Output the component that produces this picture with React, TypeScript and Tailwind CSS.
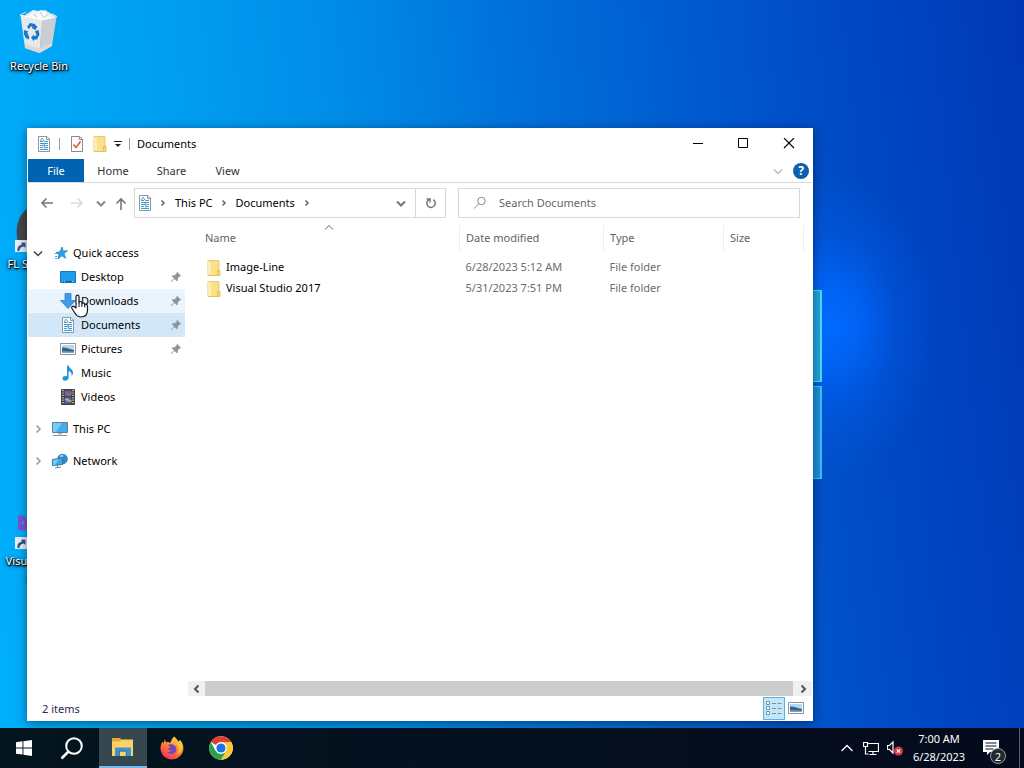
import type { ReactNode } from "react";

type IconProps = { className?: string };

function DocumentIcon({ className = "" }: IconProps) {
  return (
    <svg viewBox="0 0 16 16" className={`size-4 shrink-0 ${className}`} aria-hidden="true">
      <path d="M2.500 .5h8.500l2.500 2.500v12.500h-11z" fill="#fbfdfe" stroke="#8b979f" />
      <path d="M10.500 .5v3h3" fill="none" stroke="#8b979f" />
      <path d="M4 5.500h3M8.500 5.500h3.500M4 7.500h8M4 9.500h4M9.500 9.500h2.500M4 11.500h3M8.500 11.500h3.500M4 13.500h8" stroke="#3d9bd0" />
      <path d="M4.500 5l1-2.500h1L8 5.500M8 7.500l1 5" fill="none" stroke="#5f9cc0" />
    </svg>
  );
}

function CheckDocIcon() {
  return (
    <svg viewBox="0 0 16 18" className="h-[18px] w-4 shrink-0" aria-hidden="true">
      <path d="M2.500 1.500h8l3 3v12h-11z" fill="#fcfcfc" stroke="#8a8a8a" />
      <path d="M10.500 1.500v3h3" fill="none" stroke="#8a8a8a" />
      <path d="M4.500 9.500l2.500 3 4.500-6" fill="none" stroke="#d2643c" strokeWidth="1.700" />
    </svg>
  );
}

function FolderIcon({ className = "" }: IconProps) {
  return (
    <svg viewBox="0 0 16 16" className={`size-4 shrink-0 ${className}`} aria-hidden="true">
      <path d="M2 .5h11v15H2z" fill="#fbe08a" stroke="#ecc96a" />
      <path d="M2 1l3 1.200v13L2 14z" fill="#fdedb4" />
      <path d="M11.500 10.500h2.500v5h-2.500z" fill="#f7d973" stroke="#d8b24e" strokeWidth=".7" />
      <path d="M2 15.500h12" stroke="#e6c25c" />
    </svg>
  );
}

function StarIcon() {
  return (
    <svg viewBox="0 0 16 16" className="size-4 shrink-0" aria-hidden="true">
      <path d="M9 2l1.200 4 4.300-.2-3.500 2.700 1.600 4.800L8.800 10.800 5 14l1-4.300L3.200 7.500l3.800-.8z" fill="#2f9fe3" stroke="#1e86cb" strokeWidth=".8" />
      <path d="M1.500 8.500h2.500M2 11.500h2.500M2 13.500h2" stroke="#4eaee6" />
    </svg>
  );
}

function DesktopIcon() {
  return (
    <svg viewBox="0 0 16 16" className="size-4 shrink-0" aria-hidden="true">
      <path d="M.5 2.500h15v11H.5z" fill="#1f9bf0" stroke="#1577c4" />
      <path d="M1 12.500h14" stroke="#0d62a8" />
      <path d="M2 12.500h1M4 12.500h1M12 12.500h2" stroke="#8ed1ff" />
    </svg>
  );
}

function DownloadIcon() {
  return (
    <svg viewBox="0 0 16 16" className="size-4 shrink-0" aria-hidden="true">
      <path d="M5 .5h6v7h4.500L8 15.500.5 7.500H5z" fill="#3f9be2" stroke="#2b83cc" strokeWidth=".8" />
    </svg>
  );
}

function PicturesIcon({ className = "" }: IconProps) {
  return (
    <svg viewBox="0 0 16 16" className={`size-4 shrink-0 ${className}`} aria-hidden="true">
      <path d="M.5 2.500h15v11H.5z" fill="#fff" stroke="#8e9499" />
      <path d="M2 4h12v8H2z" fill="#b4daf3" />
      <path d="M2 6.500c4-.5 7 1.500 12 2.500v3H2z" fill="#3a617f" />
      <path d="M2 10.500c4-1 8 .5 12 0V12H2z" fill="#7da4c2" />
    </svg>
  );
}

function MusicIcon() {
  return (
    <svg viewBox="0 0 16 16" className="size-4 shrink-0" aria-hidden="true">
      <path d="M7 .5h1.600c.3 3 4.900 3.500 4.400 8-.2 1.200-.8 2-1.500 2.500.6-3-.8-4.300-2.900-5V13c0 1.600-1.600 2.700-3.400 2.700S2.500 14.600 2.500 13.200s1.700-2.500 4.500-2z" fill="#1e96dc" />
    </svg>
  );
}

function VideosIcon() {
  return (
    <svg viewBox="0 0 16 16" className="size-4 shrink-0" aria-hidden="true">
      <path d="M1.500 .5h13v15h-13z" fill="#333" stroke="#444" />
      <path d="M3 1v14M13 1v14" stroke="#f4f4f4" strokeWidth="1.300" strokeDasharray="1.200 1.200" />
      <path d="M4.500 1.500h7v6h-7z" fill="#4a68b8" />
      <path d="M4.500 4l2-1.500 2 2 3-2v3l-3 1.500z" fill="#b85e4e" />
      <path d="M4.500 8.500h7v6h-7z" fill="#4c6ac4" />
      <path d="M4.500 10.500l3-1.500 2 2.500 2-.5v2l-3-.5z" fill="#d4b24a" />
    </svg>
  );
}

function ComputerIcon() {
  return (
    <svg viewBox="0 0 16 16" className="size-4 shrink-0" aria-hidden="true">
      <path d="M.5 1.500h15v10H.5z" fill="#45aeea" stroke="#5f7f92" />
      <path d="M1 2h9L4 11H1z" fill="#78ccf7" />
      <path d="M6 12h4v1.500H6z" fill="#a9b4bb" />
      <path d="M1 14.500h14" stroke="#8b979f" />
    </svg>
  );
}

function NetworkIcon() {
  return (
    <svg viewBox="0 0 16 16" className="size-4 shrink-0" aria-hidden="true">
      <circle cx="10.500" cy="6" r="5.300" fill="#3987bf" />
      <path d="M8 2.500c1.500-1.500 3.500-.8 3.500 .3S9 5 8 4.300z" fill="#8fc8e8" />
      <path d="M.5 6.500l10-1.500v6.500l-10 1z" fill="#3fa9e4" stroke="#33769f" />
      <path d="M1 7l6-1-4 6H1z" fill="#78c9f2" />
      <path d="M5.500 12v2.500M3 15l6-.8" stroke="#6e8796" />
    </svg>
  );
}

function PinIcon() {
  return (
    <svg viewBox="0 0 12 12" className="size-3 shrink-0" role="img" aria-label="Pinned">
      <path d="M7 .8L11.200 5l-1.200.6-.5-.2-1.700 2 .1 1.900-1 .9L4.500 7.900 1 11.200l-.4-.4L4 7.400 1.800 5.100l.9-.9 1.900.1 2-1.700-.2-.6z" fill="#8d959b" />
    </svg>
  );
}

function Chevron({ dir, className = "" }: { dir: "right" | "down" | "up" | "left"; className?: string }) {
  const paths = {
    right: "M3.500 1.500L7 5 3.500 8.500",
    left: "M6.500 1.500L3 5l3.500 3.500",
    down: "M1 3.500L5 7.500l4-4",
    up: "M1 6.500l4-4 4 4",
  };
  return (
    <svg viewBox="0 0 10 10" className={`size-2.5 shrink-0 ${className}`} fill="none" stroke="currentColor" aria-hidden="true">
      <path d={paths[dir]} />
    </svg>
  );
}

function CrumbChevron() {
  return (
    <svg viewBox="0 0 10 10" className="ml-[5px] size-2.5 shrink-0" fill="none" stroke="#666" strokeWidth="1.500" aria-hidden="true">
      <path d="M3.500 2.500L6 5 3.500 7.500" />
    </svg>
  );
}

function ArrowIcon({ dir, className = "" }: { dir: "left" | "right" | "up"; className?: string }) {
  const paths = {
    left: "M13 7H2M6.500 2.500L2 7l4.500 4.500",
    right: "M1 7h11M7.500 2.500L12 7l-4.500 4.500",
    up: "M7 14V3M2.500 7.500L7 3l4.500 4.500",
  };
  return (
    <svg viewBox="0 0 14 14" className={`size-3.5 shrink-0 ${className}`} fill="none" stroke="currentColor" strokeWidth="1.600" aria-hidden="true">
      <path d={paths[dir]} />
    </svg>
  );
}

function ShortcutBadge() {
  return (
    <svg viewBox="0 0 12 12" className="absolute bottom-0 left-0 size-3" aria-hidden="true">
      <path d="M0 0h12v12H0z" fill="#e9eef5" />
      <path d="M2.500 11C2 7 4 5 6.500 5V2.500l4 .2v5L8.500 6.500C6 7 4.500 8.500 4.500 11z" fill="#2f5597" />
    </svg>
  );
}

function RecycleBinIcon() {
  return (
    <svg viewBox="0 0 48 48" className="size-12" aria-hidden="true">
      <path d="M10 9l8-5 6 1 6-1 10 6-2 4H12z" fill="#e3e8ec" />
      <path d="M14 9l4-4 4 3 3-4 6 2 1 4 5-1-3 4H15z" fill="#f8fafb" />
      <path d="M18 8l4 3M25 6l3 5M32 9l-3 3" stroke="#b9c4cc" />
      <path d="M5.500 9l22 5-3 33L10 42z" fill="#e6eaed" />
      <path d="M27 14l14.500-3L37 40 24.500 47z" fill="#c8ced3" />
      <path d="M5 9l22.500 5L42 10.500" fill="none" stroke="#fff" strokeWidth="1.200" />
      <path d="M5 9l6-3M42 10.500l-5-3" stroke="#c9e2f2" />
      <path d="M10.500 38l14.500 4.500L37 37v3l-12.500 7L10 42z" fill="#dcd9d6" />
      <g fill="#1976c9">
        <path d="M12 21l3-4 5 1 1 2 1.500 0-2 4-4-2 1.200-.6-1.700-1.400-2 3z" />
        <path d="M9 24l4.500 1.500-1.300 1 2 4.500-.5 2.500-3-1.500-2-4.500z" />
        <path d="M20 25l3.500-1 1 4.500-2.500 5h-3v2l-3-4 3-3v1.800l2.500-.8z" />
      </g>
    </svg>
  );
}

function DesktopShortcut({ label, row, children }: { label: string; row: string; children: ReactNode }) {
  return (
    <button type="button" className={`${row} flex flex-col items-center gap-1 self-start text-center`}>
      {children}
      <span className="text-[11px] leading-4 text-white [text-shadow:1px_1px_1px_#000,0_1px_2px_#000,0_1px_4px_#000]">{label}</span>
    </button>
  );
}

const quickAccess = [
  { label: "Desktop", icon: <DesktopIcon />, pinned: true, row: "" },
  { label: "Downloads", icon: <DownloadIcon />, pinned: true, row: "bg-[#e9f4fd]" },
  { label: "Documents", icon: <DocumentIcon />, pinned: true, row: "bg-[#d2e8f9]" },
  { label: "Pictures", icon: <PicturesIcon />, pinned: true, row: "" },
  { label: "Music", icon: <MusicIcon />, pinned: false, row: "" },
  { label: "Videos", icon: <VideosIcon />, pinned: false, row: "" },
];

const files = [
  { name: "Image-Line", modified: "6/28/2023 5:12 AM", type: "File folder" },
  { name: "Visual Studio 2017", modified: "5/31/2023 7:51 PM", type: "File folder" },
];

function TitleBar() {
  return (
    <header className="flex h-[30px] items-center">
      <div className="flex flex-1 items-center pl-2">
        <DocumentIcon />
        <span className="mx-[7px] h-3 w-px bg-[#9a9a9a]" />
        <button type="button" aria-label="Properties" className="ml-0.5">
          <CheckDocIcon />
        </button>
        <button type="button" aria-label="New folder" className="ml-[7px]">
          <FolderIcon />
        </button>
        <button type="button" aria-label="Customize Quick Access Toolbar" className="ml-1.5">
          <svg viewBox="0 0 8 8" className="size-2" aria-hidden="true">
            <path d="M0 1.500h8" stroke="#222" />
            <path d="M1 4h6L4 7z" fill="#222" />
          </svg>
        </button>
        <span className="mx-[7px] h-3 w-px bg-[#9a9a9a]" />
        <h1 className="text-[11px] text-black">Documents</h1>
      </div>
      <div className="flex h-full text-black">
        <button type="button" aria-label="Minimize" className="grid w-[45px] place-items-center">
          <svg viewBox="0 0 12 12" className="size-3" stroke="currentColor" aria-hidden="true"><path d="M1 5.500h10" /></svg>
        </button>
        <button type="button" aria-label="Maximize" className="grid w-[45px] place-items-center">
          <svg viewBox="0 0 12 12" className="size-3" fill="none" stroke="currentColor" aria-hidden="true"><path d="M1.500 .5h9v9h-9z" /></svg>
        </button>
        <button type="button" aria-label="Close" className="grid w-[47px] place-items-center">
          <svg viewBox="0 0 12 12" className="size-3" stroke="currentColor" strokeWidth="1.100" aria-hidden="true"><path d="M1 0l10 10M11 0L1 10" /></svg>
        </button>
      </div>
    </header>
  );
}

function Ribbon() {
  return (
    <nav aria-label="Ribbon" className="flex h-6 items-center border-b border-[#dadbdc] text-[11px] text-[#333]">
      <button type="button" className="h-full w-14 bg-[#0063b1] pt-px text-white">File</button>
      <button type="button" className="h-full w-[58px] pt-px">Home</button>
      <button type="button" className="h-full w-[59px] pt-px">Share</button>
      <button type="button" className="h-full w-[53px] pt-px">View</button>
      <button type="button" aria-label="Expand the Ribbon" className="ml-auto text-[#bbb]">
        <Chevron dir="down" className="size-2 stroke-[1.5px]" />
      </button>
      <button type="button" aria-label="Help" className="mr-[3px] ml-2.5 grid size-4 place-items-center rounded-full bg-[#0f5fae] text-xs font-bold text-white">
        ?
      </button>
    </nav>
  );
}

function AddressRow() {
  return (
    <div className="flex items-center pt-[5px] pr-3 text-[11px]">
      <div className="flex w-[106px] items-center text-[#777]">
        <button type="button" aria-label="Back" className="ml-3"><ArrowIcon dir="left" /></button>
        <button type="button" aria-label="Forward" className="ml-4 text-[#dadada]"><ArrowIcon dir="right" /></button>
        <button type="button" aria-label="Recent locations" className="ml-3 text-[#888]"><Chevron dir="down" className="size-2 stroke-2" /></button>
        <button type="button" aria-label="Up" className="ml-2"><ArrowIcon dir="up" /></button>
      </div>
      <div className="flex h-[30px] w-[312px] items-center border border-[#d9d9d9] pl-0.5">
        <DocumentIcon />
        <CrumbChevron />
        <a href="#this-pc" className="ml-[7px] text-black">This PC</a>
        <span className="ml-px flex"><CrumbChevron /></span>
        <a href="#documents" className="ml-[7px] text-black">Documents</a>
        <span className="ml-0.5 flex"><CrumbChevron /></span>
        <button type="button" aria-label="Previous locations" className="ml-auto grid h-full w-7 place-items-center text-[#777]">
          <Chevron dir="down" className="stroke-2" />
        </button>
        <button type="button" aria-label="Refresh" className="grid h-full w-[30px] place-items-center border-l border-[#d9d9d9]">
          <svg viewBox="0 0 12 12" className="size-3" fill="none" stroke="#777" strokeWidth="1.500" aria-hidden="true">
            <path d="M8.300 2.700a4.200 4.200 0 1 1-5 .3l1.700-1" />
            <path d="M1.500 2H5v3.500" />
          </svg>
        </button>
      </div>
      <label className="ml-3 flex h-[30px] flex-1 items-center border border-[#d9d9d9] pl-3.5">
        <svg viewBox="0 0 14 14" className="size-3.5 shrink-0" fill="none" stroke="#888" aria-hidden="true">
          <circle cx="8.500" cy="5" r="3.700" />
          <path d="M6 7.700L1 12.500" />
        </svg>
        <input type="search" aria-label="Search Documents" placeholder="Search Documents" className="ml-3 min-w-0 flex-1 text-[11px] outline-none placeholder:text-[#666]" />
      </label>
    </div>
  );
}

function NavPane() {
  return (
    <nav aria-label="Folders" className="w-40 shrink-0 pt-[23px] text-[11px] text-black">
      <a href="#quick-access" className="flex h-6 items-center gap-1 pl-[5px]">
        <Chevron dir="down" className="mr-1.5 stroke-[1.5px] text-[#444]" />
        <StarIcon />Quick access
      </a>
      <ul className="mr-[3px]">
        {quickAccess.map((item) => (
          <li key={item.label}>
            <a href={`#${item.label.toLowerCase()}`} className={`flex h-6 items-center gap-[5px] pr-[3px] pl-8 ${item.row}`}>
              {item.icon}
              <span className="flex-1">{item.label}</span>
              {item.pinned && <PinIcon />}
            </a>
          </li>
        ))}
      </ul>
      <a href="#this-pc" className="mt-2 flex h-6 items-center gap-[5px] pl-[5px]">
        <Chevron dir="right" className="mr-1 stroke-[1.5px] text-[#999]" />
        <ComputerIcon />This PC
      </a>
      <a href="#network" className="mt-2 flex h-6 items-center gap-[5px] pl-[5px]">
        <Chevron dir="right" className="mr-1 stroke-[1.5px] text-[#999]" />
        <NetworkIcon />Network
      </a>
    </nav>
  );
}

function FileList() {
  return (
    <section className="flex min-w-0 flex-1 flex-col">
      <div className="flex-1 pt-[7px] pr-2">
        <table className="w-full table-fixed text-left text-[11px]">
          <colgroup>
            <col />
            <col className="w-36" />
            <col className="w-[120px]" />
            <col className="w-20" />
          </colgroup>
          <thead className="text-[#5f6368]">
            <tr className="h-[27px]">
              <th className="relative border-r border-[#eeeeee] pl-[17px] font-normal">
                Name
                <Chevron dir="up" className="absolute -top-0.5 left-1/2 text-[#666]" />
              </th>
              <th className="border-r border-[#eeeeee] pl-1.5 font-normal">Date modified</th>
              <th className="border-r border-[#eeeeee] pl-1.5 font-normal">Type</th>
              <th className="border-r border-[#eeeeee] pl-1.5 font-normal">Size</th>
            </tr>
          </thead>
          <tbody className="before:block before:h-[5px]">
            {files.map((file) => (
              <tr key={file.name} className="h-[21px] text-[#6d6d6d]">
                <td className="pl-[18px] text-black">
                  <span className="flex items-center gap-1"><FolderIcon />{file.name}</span>
                </td>
                <td className="pl-1.5">{file.modified}</td>
                <td className="pl-1.5">{file.type}</td>
                <td />
              </tr>
            ))}
          </tbody>
        </table>
      </div>
      <div className="flex h-[15px] bg-[#f0f0f0] text-[#555]">
        <button type="button" aria-label="Scroll left" className="grid w-[17px] place-items-center"><Chevron dir="left" className="stroke-2" /></button>
        <div className="flex-1 bg-[#cdcdcd]" />
        <button type="button" aria-label="Scroll right" className="grid w-[19px] place-items-center"><Chevron dir="right" className="stroke-2" /></button>
      </div>
    </section>
  );
}

function StatusBar() {
  return (
    <footer className="flex h-6 items-center pr-2 pl-3.5 text-[11px] text-[#1e2a55]">
      <span className="flex-1 pt-0.5">2 items</span>
      <button type="button" aria-label="Details view" className="grid h-[23px] w-[22px] place-items-center border border-[#5fb0dc] bg-[#c3e6f8]">
        <svg viewBox="0 0 16 14" className="h-3.5 w-4" fill="none" stroke="#7d919d" aria-hidden="true">
          <path d="M.5 .5h3v3h-3zM.5 5.500h3v3h-3zM.5 10.500h3v3h-3z" fill="#fff" />
          <path d="M6 2.500h4M11.500 2.500h4M6 7.500h4M11.500 7.500h4M6 12.500h4M11.500 12.500h4" />
        </svg>
      </button>
      <button type="button" aria-label="Large icons view" className="ml-[3px]"><PicturesIcon className="size-3.5" /></button>
    </footer>
  );
}

function FirefoxIcon() {
  return (
    <svg viewBox="0 0 24 24" className="size-6" aria-hidden="true">
      <defs>
        <linearGradient id="flame" x1="0.8" y1="0" x2="0.2" y2="1">
          <stop offset="0" stopColor="#ffe14a" />
          <stop offset="0.45" stopColor="#ff8a2b" />
          <stop offset="0.8" stopColor="#fb4a4a" />
          <stop offset="1" stopColor="#ee2a6c" />
        </linearGradient>
      </defs>
      <path d="M14 .5c2.200 1.500 3.500 3.200 4.200 5 1-.2 1.500-.9 1.500-2 3.800 4 4.600 8.900 2.800 13-1.800 4.200-6 7-10.700 7C5.500 23.500.5 18.500.5 12.300c0-3 .9-5.300 2-6.900l.7 2L5 3.200l1 3.200c1.500-.5 3-.4 4.400.3C11 4.500 12.200 2.300 14 .5z" fill="url(#flame)" />
      <path d="M7.500 9.500c2.500-2 5-2 7 0 2.500 2 2.500 5.500.3 7.300-2.300 1.900-6 1.400-7.500-1 1.800.6 3.500 0 4.800-1.200-1.800-.3-4-.6-4.600-2.100 1.500-.1 2.500-.8 2.700-1.800-.8-.7-1.800-.9-2.700-1.200z" fill="#7542c8" />
      <path d="M14.500 2.500c.2 4 4.500 5.500 4.500 10 0 3-1.500 5-3.500 6 5.500-.5 7.500-6 5.500-11-1.500 1-5 .2-6.500-5z" fill="#ffd23c" opacity=".8" />
    </svg>
  );
}

function ChromeIcon() {
  return (
    <svg viewBox="0 0 24 24" className="size-6" aria-hidden="true">
      <circle cx="12" cy="12" r="11.800" fill="#fff" />
      <path d="M12 12L1.800 6A11.800 11.800 0 0 1 22.200 6z" fill="#e33b2e" />
      <path d="M12 12V6h10.200A11.800 11.800 0 0 1 12 23.800l5.200-9z" fill="#fcc934" />
      <path d="M12 12l5.200 3L12 23.800A11.800 11.800 0 0 1 1.800 6l5 9z" fill="#2aa24c" />
      <circle cx="12" cy="12" r="5.900" fill="#fff" />
      <circle cx="12" cy="12" r="4.600" fill="#1f72e8" />
    </svg>
  );
}

function Taskbar() {
  return (
    <footer className="flex h-10 shrink-0 bg-linear-to-r from-[#03151f] to-[#040a1c] text-white">
      <button type="button" aria-label="Start" className="grid w-12 place-items-center">
        <svg viewBox="0 0 16 16" className="size-4" fill="#fff" aria-hidden="true">
          <path d="M0 2.200l6.500-.9v6.200H0zM7.400 1.200L16 0v7.500H7.400zM0 8.400h6.500v6.200L0 13.700zM7.400 8.400H16V16l-8.600-1.200z" />
        </svg>
      </button>
      <button type="button" aria-label="Search" className="mr-[3px] grid w-12 place-items-center">
        <svg viewBox="0 0 24 24" className="size-6" fill="none" stroke="#fff" strokeWidth="2" aria-hidden="true">
          <circle cx="14" cy="10" r="7.800" />
          <path d="M8.500 15.500L1.500 22.500" strokeWidth="2.500" />
        </svg>
      </button>
      <button type="button" aria-label="File Explorer" className="grid w-12 place-items-center border-b-2 border-[#76b9ed] bg-[#36474f]">
        <svg viewBox="0 0 24 20" className="h-5 w-6" aria-hidden="true">
          <path d="M1 1h8l2 2h11v4H1z" fill="#e9a92c" />
          <path d="M1 4.500h8l2-2h11V19H1z" fill="#fad268" />
          <path d="M4.500 10.500h14.500q1 0 1 1V19H4V11.500q0-1 .5-1z" fill="#3f93cf" />
          <path d="M8.500 14.500h6.500V19H8.500z" fill="#fad268" />
          <path d="M8 14h7.500M8.300 14v5M15.300 14v5" stroke="#2776ae" />
        </svg>
      </button>
      <button type="button" aria-label="Firefox" className="grid w-[50px] place-items-center"><FirefoxIcon /></button>
      <button type="button" aria-label="Google Chrome" className="grid w-12 place-items-center"><ChromeIcon /></button>
      <div className="ml-auto flex items-center">
        <button type="button" aria-label="Show hidden icons">
          <svg viewBox="0 0 12 12" className="size-3" fill="none" stroke="#fff" strokeWidth="1.300" aria-hidden="true"><path d="M.5 9L6 3.500 11.500 9" /></svg>
        </button>
        <button type="button" aria-label="Network status" className="ml-2.5">
          <svg viewBox="0 0 16 14" className="h-3.5 w-4" fill="none" stroke="#fff" strokeWidth="1.200" aria-hidden="true">
            <path d="M5 2.500h10.500v8H5.500M10 10.500v3M6.500 13.500h7" />
            <path d="M.5 1.500h4v4h-4zM2.500 5.500v7.500h3" />
          </svg>
        </button>
        <button type="button" aria-label="Volume muted" className="ml-2">
          <svg viewBox="0 0 16 16" className="size-4" fill="none" aria-hidden="true">
            <path d="M.5 5.500h2L6 2v11L2.500 9.500h-2z" stroke="#fff" strokeWidth="1.200" />
            <circle cx="11.500" cy="11" r="4.500" fill="#d83a42" />
            <path d="M9.800 9.300l3.400 3.400M13.200 9.300l-3.400 3.400" stroke="#fff" strokeWidth="1.200" />
          </svg>
        </button>
        <button type="button" className="ml-[7px] w-[58px] text-center text-[11px] leading-[18px]">
          <span className="block">7:00 AM</span>
          <span className="block">6/28/2023</span>
        </button>
        <button type="button" aria-label="Notifications" className="relative mr-3.5 ml-[13px] size-6">
          <svg viewBox="0 0 24 24" className="size-6" aria-hidden="true">
            <path d="M2 4h16v12h-9l-3 3v-3H2z" fill="#fff" />
            <path d="M4.500 7h11M4.500 10h11M4.500 13h8" stroke="#081020" strokeWidth="1.200" />
          </svg>
          <span className="absolute -right-px -bottom-1 grid size-4 place-items-center rounded-full border border-[#9a9a9a] bg-[#222831] text-[11px] leading-none">2</span>
        </button>
        <button type="button" aria-label="Show desktop" className="h-10 w-[5px] border-l border-[#5a5f6c]" />
      </div>
    </footer>
  );
}

export default function App() {
  return (
    <div className="flex min-h-screen flex-col bg-[radial-gradient(ellipse_110px_150px_at_830px_325px,#006aff_0%,#0068ffcc_25%,#0060f255_60%,#0050dd00_100%),linear-gradient(84deg,#00affc_0%,#00a2f4_18%,#008ee8_36%,#0070da_54%,#0054cc_74%,#0044c0_88%,#0038b4_100%)] font-['Noto_Sans','Open_Sans',sans-serif]">
      <main className="relative flex-1 overflow-hidden">
        <div className="grid w-[78px] auto-rows-[99px] pt-1.5">
          <DesktopShortcut label="Recycle Bin" row="row-start-1">
            <RecycleBinIcon />
          </DesktopShortcut>
          <DesktopShortcut label="FL Studio 20" row="row-start-3">
            <span className="relative block size-12">
              <svg viewBox="0 0 48 48" className="size-12" aria-hidden="true">
                <path d="M16 2C6 8 0 18 2 34c2 10 10 12 22 12s20-6 20-18S34 0 16 2z" fill="#45474c" />
              </svg>
              <ShortcutBadge />
            </span>
          </DesktopShortcut>
          <DesktopShortcut label="Visual Studio 2017" row="row-start-6">
            <span className="relative block size-12">
              <svg viewBox="0 0 48 48" className="size-12" aria-hidden="true">
                <path d="M3 15l4-1 4 3v2l6 5L36 3l10 4v34l-10 4-19-17-8 1H3z" fill="#7a52d0" />
                <path d="M7 19l3 2.500-3 2.500z" fill="#1ba6f6" />
              </svg>
              <ShortcutBadge />
            </span>
          </DesktopShortcut>
        </div>

        <div className="absolute top-[290px] left-[700px] w-[122px]" aria-hidden="true">
          <div className="h-[92px] border border-r-2 border-[#4fd8f8] bg-[#20a5dc]" />
          <div className="mt-1 h-[93px] border border-r-2 border-[#45bdf5] bg-[#1c90dc]" />
        </div>

        <div className="absolute top-32 left-[27px] flex h-[593px] w-[786px] flex-col border border-white bg-white shadow-[0_2px_10px_rgba(0,0,0,0.45)]">
          <TitleBar />
          <Ribbon />
          <AddressRow />
          <div className="flex min-h-0 flex-1">
            <NavPane />
            <FileList />
          </div>
          <StatusBar />
        </div>

        <svg viewBox="0 0 18 24" className="pointer-events-none absolute top-[294px] left-[71px] h-6 w-[18px]" aria-hidden="true">
          <path d="M5 14V3c0-2.500 3-2.500 3 0v6c0-2 2.700-2 2.900 0v1c.3-1.700 2.600-1.500 2.800.3v.8c.5-1.300 2.800-1 2.800 1V16c0 4-2 7-6.500 7C6.500 23 5 21 3.500 18.500L1 14.500c-1-2 1-3 2.300-1.700z" fill="#fff" stroke="#14142a" strokeWidth="1.200" strokeLinejoin="round" />
          <path d="M8 9v4M10.900 10v3M13.700 11v2.500" stroke="#14142a" />
        </svg>
      </main>
      <Taskbar />
    </div>
  );
}
